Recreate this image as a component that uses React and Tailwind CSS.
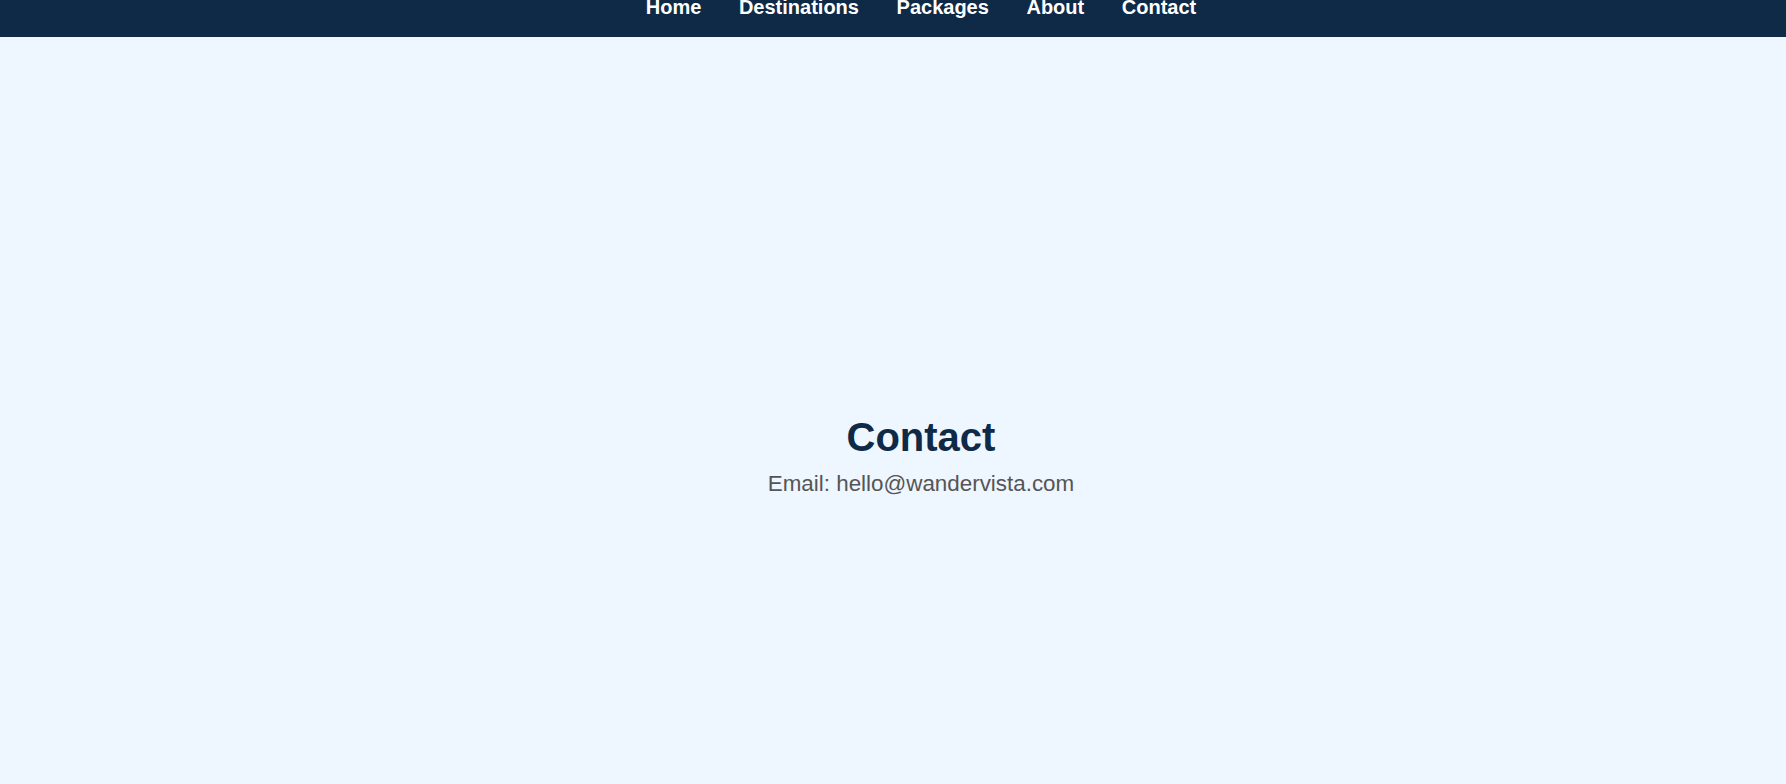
export default function App() {
  const items = ["Home", "Destinations", "Packages", "About", "Contact"];
  return (
    <div
      className="w-full min-h-[784px] bg-[#eef6ff] flex flex-col"
      style={{ fontFamily: '"Liberation Sans", Arial, sans-serif' }}
    >
      <nav className="h-[37px] bg-[#0f2a47] flex justify-center pl-[56px] overflow-hidden">
        <ul className="flex gap-[37.6px] mt-[-3.5px]">
          {items.map((t) => (
            <li key={t} className="text-white font-bold text-[20px] leading-[20px]">
              {t}
            </li>
          ))}
        </ul>
      </nav>
      <main className="flex flex-col items-center pt-[376px] pl-[56px]">
        <h1 className="text-[40px] leading-[48px] font-bold text-[#0f2a47]">Contact</h1>
        <p className="mt-[6px] text-[22.4px] leading-[33.6px] text-[#555555]">
          Email: hello@wandervista.com
        </p>
      </main>
    </div>
  );
}
